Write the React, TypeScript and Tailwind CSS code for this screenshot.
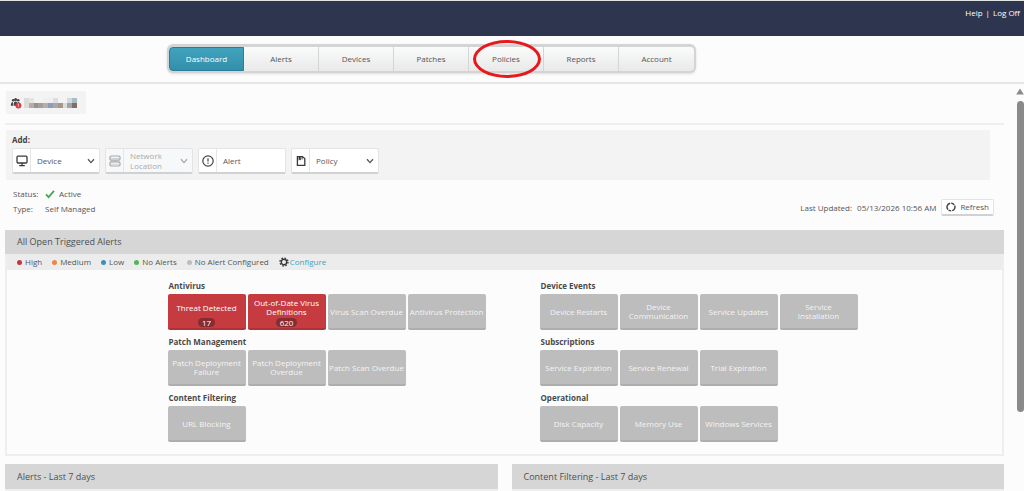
import React from "react";

const navItems = ["Dashboard", "Alerts", "Devices", "Patches", "Policies", "Reports", "Account"];

const legend = [
  { label: "High", color: "bg-[#c5363f]" },
  { label: "Medium", color: "bg-[#f0844c]" },
  { label: "Low", color: "bg-[#3f8fba]" },
  { label: "No Alerts", color: "bg-[#55b559]" },
  { label: "No Alert Configured", color: "bg-[#bdbdbd]" },
];

type Tile = { label: string; count?: number };
type Group = { title: string; tiles: Tile[] };

const leftGroups: Group[] = [
  {
    title: "Antivirus",
    tiles: [
      { label: "Threat Detected", count: 17 },
      { label: "Out-of-Date Virus Definitions", count: 620 },
      { label: "Virus Scan Overdue" },
      { label: "Antivirus Protection" },
    ],
  },
  {
    title: "Patch Management",
    tiles: [
      { label: "Patch Deployment Failure" },
      { label: "Patch Deployment Overdue" },
      { label: "Patch Scan Overdue" },
    ],
  },
  { title: "Content Filtering", tiles: [{ label: "URL Blocking" }] },
];

const rightGroups: Group[] = [
  {
    title: "Device Events",
    tiles: [
      { label: "Device Restarts" },
      { label: "Device Communication" },
      { label: "Service Updates" },
      { label: "Service\nInstallation" },
    ],
  },
  {
    title: "Subscriptions",
    tiles: [
      { label: "Service Expiration" },
      { label: "Service Renewal" },
      { label: "Trial Expiration" },
    ],
  },
  {
    title: "Operational",
    tiles: [
      { label: "Disk Capacity" },
      { label: "Memory Use" },
      { label: "Windows Services" },
    ],
  },
];

// masked account name, two rows of blocks
const maskRows = [
  ["#dcdcd9", "#e6e5e3", "#f3f3f3", "#f3f3f3", "#f0f0f0", "#efefef", "#dcdfe2", "#f3f3f3", "#f3f3f3", "#d5d8da", "#a9bcc4"],
  ["#dcdcdb", "#b5aca8", "#9c908b", "#a39f9f", "#b5afa9", "#8f9db3", "#aaa7ae", "#a8968c", "#dcdcdc", "#9aa5b4", "#856b60"],
];

const MonitorIcon = () => (
  <svg width="12" height="12" viewBox="0 0 12 12" fill="none" stroke="#3a3a3a" strokeWidth="1.3">
    <rect x="1" y="1.2" width="10" height="6.8" rx="1" />
    <path d="M6 8v2.2M3.2 10.6h5.6" />
  </svg>
);

const ServerIcon = () => (
  <svg width="12" height="12" viewBox="0 0 12 12" fill="none" stroke="#a3a6a8" strokeWidth="1.2">
    <rect x="1" y="1" width="10" height="4.2" rx="1.2" />
    <rect x="1" y="6.8" width="10" height="4.2" rx="1.2" />
    <path d="M2 3.4h8M2 9.2h8" strokeWidth="0.5" />
  </svg>
);

const AlertIcon = () => (
  <svg width="12" height="12" viewBox="0 0 12 12" fill="none" stroke="#444" strokeWidth="1.2">
    <circle cx="6" cy="6" r="5.2" />
    <path d="M6 3.2v3.4M6 7.6v1.2" />
  </svg>
);

const PolicyIcon = () => (
  <svg width="12" height="12" viewBox="0 0 12 12" fill="none" stroke="#3a3a3a" strokeWidth="1.3">
    <path d="M2.4 1.6h5l2.4 2v6.8H2.4z" />
    <path d="M3.6 1.2h2.2v4.4l-1.1-.9-1.1.9zM6.6 1.6h1v2.8h-1z" fill="#3a3a3a" stroke="none" />
  </svg>
);

const Chevron = () => (
  <svg width="8" height="8" viewBox="0 0 8 8" fill="none" stroke="currentColor" strokeWidth="1.3">
    <path d="M1 2.2l3 3.4 3-3.4" />
  </svg>
);

const UsersIcon = () => (
  <svg width="12" height="12" viewBox="0 0 12 12" fill="#444">
    <circle cx="3.2" cy="3.2" r="1.3" />
    <circle cx="5.6" cy="2.6" r="1.5" />
    <circle cx="8.2" cy="3.2" r="1.3" />
    <path d="M.8 8.8C.8 6.4 1.6 5 3 5v3.8zM3.6 8.8c0-2.8.6-4.2 2-4.2s2.2 1.4 2.2 4.2zM8 5c1.2 0 2 1 2 2.4H8z" />
    <circle cx="8.4" cy="8.4" r="3" fill="#d43b43" />
    <path d="M8.4 6.6v2.2M8.4 9.4v.8" stroke="#f6c9cb" strokeWidth="0.9" />
  </svg>
);

const GearIcon = () => (
  <svg width="10" height="10" viewBox="0 0 10 10" fill="none" stroke="#3a3a3a">
    <circle cx="5" cy="5" r="2.7" strokeWidth="1.4" />
    <circle cx="5" cy="5" r="4" strokeWidth="1.3" strokeDasharray="1.6 1.54" />
  </svg>
);

const RefreshIcon = () => (
  <svg width="10" height="10" viewBox="0 0 10 10" fill="none" stroke="#3f3f3f" strokeWidth="1.4">
    <path d="M2 7.6A3.9 3.9 0 0 1 4.2 1.2M5.2 1.1a3.9 3.9 0 0 1 3 1.7M8.7 3.6a3.9 3.9 0 0 1-2.5 5.1M5.2 8.9a3.9 3.9 0 0 1-2.6-.9" />
  </svg>
);

const addButtons = [
  { label: "Device", icon: MonitorIcon, menu: true },
  { label: "Network Location", icon: ServerIcon, menu: true, disabled: true },
  { label: "Alert", icon: AlertIcon },
  { label: "Policy", icon: PolicyIcon, menu: true },
];

const AlertGroup = ({ group }: { group: Group }) => (
  <section>
    <h3 className="h-4 pl-px leading-4 font-bold text-[#4a4a4a]">{group.title}</h3>
    <div className="flex gap-0.5 mb-1">
      {group.tiles.map((tile) => (
        <button
          key={tile.label}
          className={
            tile.count
              ? "flex flex-col items-center w-[78px] h-9 px-1 rounded-xs bg-[#c53b40] border-b-2 border-[#ad3338] text-white leading-[9px]"
              : "flex items-center justify-center w-[78px] h-9 rounded-xs bg-[#bdbdbd] border-b-2 border-[#adadad] text-[#f4f4f4] leading-[9px] whitespace-pre-line"
          }
        >
          <span className={tile.count ? "flex flex-1 items-center pt-0.5" : ""}>{tile.label}</span>
          {tile.count && (
            <span className="h-[9px] px-1 mb-px rounded-full bg-[#862c30]">{tile.count}</span>
          )}
        </button>
      ))}
    </div>
  </section>
);

export default function App() {
  return (
    <div className="flex flex-col min-h-screen bg-[#fcfcfc] font-['Open_Sans',sans-serif] text-[8px] text-[#555]">
      <header className="border-b-2 border-[#e4e7e7]">
        <div className="flex justify-end h-[36px] pt-1.5 pr-1 bg-[#2e364f] border-t border-[#dfe4e2] text-white">
          <div className="flex gap-[3px] h-3 leading-3">
            <a href="#help">Help</a>
            <span>|</span>
            <a href="#logoff">Log Off</a>
          </div>
        </div>
        <nav className="flex h-[46px] pt-2 pl-[167px]">
          <div className="flex h-[29px] p-0.5 pt-[3px] rounded-md bg-[#d3d5d5] shadow-sm">
            {navItems.map((item, i) => (
              <a
                key={item}
                href={"#" + item.toLowerCase()}
                className={
                  i === 0
                    ? "flex items-center justify-center w-[75px] rounded-l-sm border border-[#2a7d96] bg-linear-to-b from-[#41a3bd] to-[#338fab] text-white"
                    : "relative flex items-center justify-center w-[75px] border-r border-[#d4d6d6] bg-linear-to-b from-[#fafbfb] to-[#e8e9e8] last:rounded-r-sm last:border-r-0"
                }
              >
                {item}
                {item === "Policies" && (
                  <span className="absolute left-1 right-0.5 -inset-y-[7px] rounded-[50%] border-3 border-[#e8191c]" />
                )}
              </a>
            ))}
          </div>
        </nav>
      </header>

      <div className="flex flex-1">
        <main className="flex-1 pl-[5px] pr-3">
          <div className="pt-[7px] pb-[9px] border-b-2 border-[#eeeeeb]">
            <div className="flex items-center gap-0.5 w-20 h-[23px] ml-px pl-1 bg-[#f3f3f3]">
              <UsersIcon />
              <svg width="53" height="10" viewBox="0 0 11 2" preserveAspectRatio="none" shapeRendering="crispEdges">
                {maskRows.map((row, y) =>
                  row.map((fill, x) => <rect key={x + "-" + y} x={x} y={y} width="1" height="1" fill={fill} />)
                )}
              </svg>
            </div>
          </div>

          <section className="mt-[5px] ml-px mr-3.5 h-[50px] px-1.5 pt-1 bg-[#f3f3f3]">
            <h2 className="leading-3 font-bold text-[#444]">Add:</h2>
            <div className="flex gap-[5px] mt-0.5">
              {addButtons.map((b) => (
                <button
                  key={b.label}
                  disabled={b.disabled}
                  aria-haspopup={b.menu ? "menu" : undefined}
                  className="flex items-center w-[88px] h-[26px] rounded-xs border border-b-2 border-[#e4e4e4] border-b-[#cfd1d2] bg-white text-left leading-[10px] disabled:bg-[#f6f8fa] disabled:text-[#aaa]"
                >
                  <span className="flex items-center justify-center w-[18px] h-full border-r border-[#e6e6e6]">
                    <b.icon />
                  </span>
                  <span className="flex-1 pl-1.5">{b.label}</span>
                  {b.menu && (
                    <span className="pr-1">
                      <Chevron />
                    </span>
                  )}
                </button>
              ))}
            </div>
          </section>

          <section className="flex items-end justify-between pt-1.5 pb-3.5 pl-2 pr-2.5">
            <dl className="grid grid-cols-[32px_auto] leading-[15px]">
              <dt>Status:</dt>
              <dd className="flex items-center gap-1">
                <svg width="10" height="10" viewBox="0 0 10 10" fill="none" stroke="#3fae49" strokeWidth="1.8">
                  <path d="M1 5.4l2.6 2.8L9 1.8" />
                </svg>
                Active
              </dd>
              <dt>Type:</dt>
              <dd>Self Managed</dd>
            </dl>
            <div className="flex items-center gap-[5px]">
              <span>Last Updated:</span>
              <span>05/13/2026 10:56 AM</span>
              <button className="flex items-center gap-1 h-[17px] px-1 rounded-xs border border-b-2 border-[#e4e4e4] border-b-[#cfd1d2] bg-white">
                <RefreshIcon />
                Refresh
              </button>
            </div>
          </section>

          <section className="border-2 border-t-0 border-[#eeeeee]">
            <h2 className="-mx-0.5 h-6 pl-3 leading-6 text-[9px] bg-[#d6d6d6] text-[#4f4f4f]">All Open Triggered Alerts</h2>
            <ul className="flex items-center gap-2.5 h-4 pl-2.5 bg-[#ececec]">
              {legend.map((l) => (
                <li key={l.label} className="flex items-center gap-[3px]">
                  <span className={"size-[5px] rounded-full " + l.color} />
                  {l.label}
                </li>
              ))}
              <li>
                <a href="#configure" className="flex items-center gap-px text-[#3fa3c0]">
                  <GearIcon />
                  Configure
                </a>
              </li>
            </ul>
            <div className="flex justify-center gap-[54px] pt-2 pb-2 pl-4">
              <div className="w-[318px]">
                {leftGroups.map((g) => (
                  <AlertGroup key={g.title} group={g} />
                ))}
              </div>
              <div className="w-[318px]">
                {rightGroups.map((g) => (
                  <AlertGroup key={g.title} group={g} />
                ))}
              </div>
            </div>
          </section>

          <div className="grid grid-cols-2 gap-3.5 mt-2 text-[9px] text-[#4f4f4f]">
            <h2 className="h-[27px] pl-3 leading-[25px] bg-[#d6d6d6] border-b-2 border-[#eeeeee]">Alerts - Last 7 days</h2>
            <h2 className="h-[27px] pl-3 leading-[25px] bg-[#d6d6d6] border-b-2 border-[#eeeeee]">Content Filtering - Last 7 days</h2>
          </div>
        </main>

        <div className="flex flex-col items-center w-2 pt-1">
          <svg width="8" height="7" viewBox="0 0 8 7" fill="#8a8a8a">
            <path d="M4 0.5L7.8 6.5H0.2z" />
          </svg>
          <div className="w-[7px] h-[311px] mt-1.5 rounded-full bg-[#8a8a8a]" />
        </div>
      </div>
    </div>
  );
}
